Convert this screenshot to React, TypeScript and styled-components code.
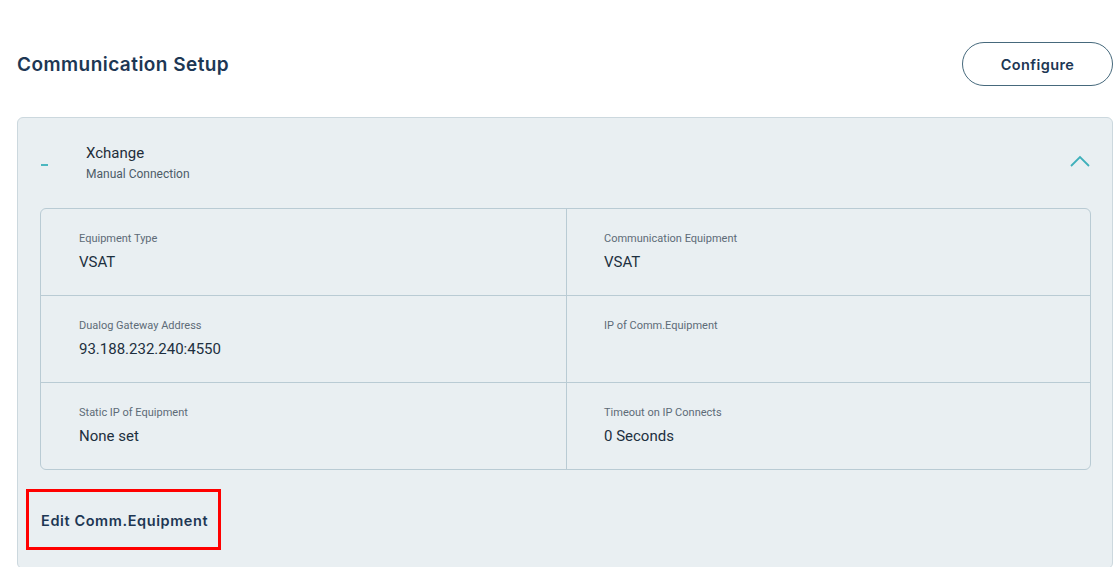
import styled, { createGlobalStyle } from "styled-components";

const GlobalStyle = createGlobalStyle`
  html, body {
    margin: 0;
    padding: 0;
    background: #ffffff;
  }
  * {
    box-sizing: border-box;
  }
`;

const Page = styled.div`
  padding: 42px 2px 0 17px;
  font-family: Roboto, "Liberation Sans", sans-serif;
  width: 1115px;
  height: 567px;
  overflow: hidden;
`;

const TopBar = styled.div`
  display: flex;
  justify-content: space-between;
  align-items: center;
  height: 44px;
`;

const Title = styled.h2`
  margin: 0;
  font-family: Inter, "Open Sans", sans-serif;
  font-weight: 600;
  font-size: 19px;
  color: #1d3754;
  letter-spacing: 0.45px;
`;

const ConfigureBtn = styled.button`
  width: 151px;
  height: 44px;
  border-radius: 22px;
  border: 1.5px solid #46697c;
  background: #ffffff;
  color: #1d3754;
  font-family: Inter, "Open Sans", sans-serif;
  font-weight: 600;
  font-size: 14.5px;
  letter-spacing: 0.4px;
  cursor: pointer;
`;

const Card = styled.section`
  margin-top: 31px;
  background: #e9eff2;
  border: 1px solid #ccd8de;
  border-radius: 6px;
  padding: 0 21px 0 22px;
  height: 452px;
`;

const CardHeader = styled.div`
  display: flex;
  align-items: center;
  height: 90px;
  padding-bottom: 2px;
`;

const Dash = styled.span`
  width: 7px;
  height: 2px;
  background: #4bb7c0;
  margin: 6px 0 0 1px;
`;

const HeaderText = styled.div`
  margin-left: 38px;
  display: flex;
  flex-direction: column;
  gap: 5px;
  flex: 1;
`;

const Name = styled.div`
  font-size: 15px;
  color: #1f2d3a;
`;

const Sub = styled.div`
  font-size: 12px;
  color: #4d5c68;
`;

const Chevron = styled.svg`
  width: 22px;
  height: 14px;
  margin: 0 0 2px 0;
`;

const Grid = styled.div`
  display: grid;
  grid-template-columns: 525px 1fr;
  border: 1px solid #b9cbd4;
  border-radius: 6px;
`;

const Cell = styled.div<{ $right?: boolean; $last?: boolean }>`
  height: ${(p) => (p.$last ? "86px" : "87px")};
  padding: 23px 0 0 ${(p) => (p.$right ? "37px" : "38px")};
  border-left: ${(p) => (p.$right ? "1px solid #b9cbd4" : "none")};
  border-bottom: ${(p) => (p.$last ? "none" : "1px solid #b9cbd4")};
`;

const Label = styled.div`
  font-size: 11px;
  line-height: 14px;
  color: #5d6b77;
`;

const Value = styled.div`
  margin-top: 7px;
  font-size: 15px;
  line-height: 18px;
  color: #1d2f40;
`;

const EditWrap = styled.div`
  margin: 19px 0 0 -14px;
  width: 195px;
  height: 61px;
  border: 3px solid #ff0000;
  display: flex;
  align-items: center;
  padding: 2px 0 0 12px;
`;

const EditLink = styled.span`
  font-family: Inter, "Open Sans", sans-serif;
  font-weight: 600;
  font-size: 14.5px;
  color: #1d3754;
  letter-spacing: 0.6px;
`;

const rows = [
  [
    { label: "Equipment Type", value: "VSAT" },
    { label: "Communication Equipment", value: "VSAT" },
  ],
  [
    { label: "Dualog Gateway Address", value: "93.188.232.240:4550" },
    { label: "IP of Comm.Equipment", value: "" },
  ],
  [
    { label: "Static IP of Equipment", value: "None set" },
    { label: "Timeout on IP Connects", value: "0 Seconds" },
  ],
];

export default function App() {
  return (
    <Page>
      <GlobalStyle />
      <TopBar>
        <Title>Communication Setup</Title>
        <ConfigureBtn>Configure</ConfigureBtn>
      </TopBar>
      <Card>
        <CardHeader>
          <Dash />
          <HeaderText>
            <Name>Xchange</Name>
            <Sub>Manual Connection</Sub>
          </HeaderText>
          <Chevron viewBox="0 0 22 14" fill="none">
            <path d="M2 12 L11 3 L20 12" stroke="#3fb0bb" strokeWidth="1.8" />
          </Chevron>
        </CardHeader>
        <Grid>
          {rows.map((row, i) =>
            row.map((c, j) => (
              <Cell key={`${i}-${j}`} $right={j === 1} $last={i === rows.length - 1}>
                <Label>{c.label}</Label>
                {c.value && <Value>{c.value}</Value>}
              </Cell>
            ))
          )}
        </Grid>
        <EditWrap>
          <EditLink>Edit Comm.Equipment</EditLink>
        </EditWrap>
      </Card>
    </Page>
  );
}
